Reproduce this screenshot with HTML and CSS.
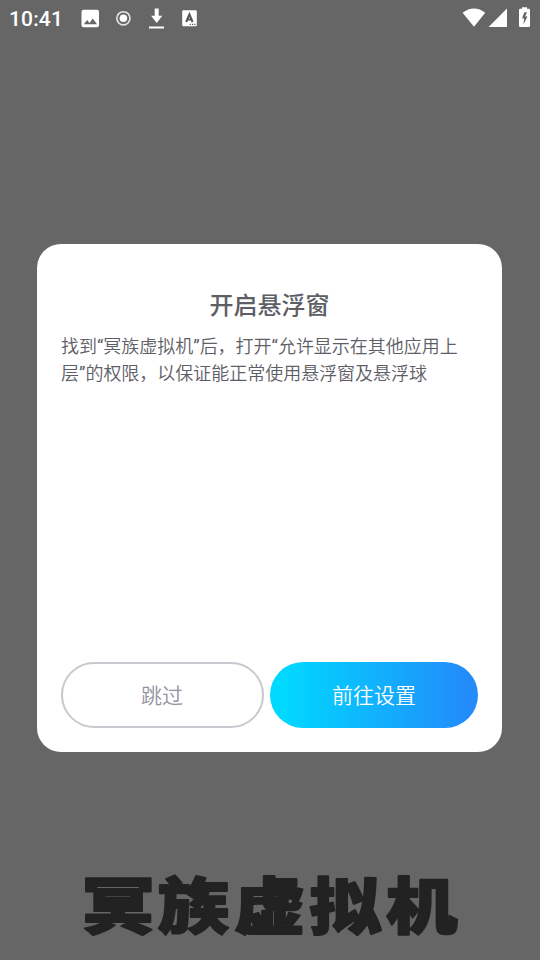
FILE: index.html
```html
<!DOCTYPE html>
<html lang="zh-CN">
<head>
<meta charset="utf-8">
<title>开启悬浮窗</title>
<link rel="stylesheet" href="styles.css">
</head>
<body>
<div class="screen">
  <header class="status">
    <span class="clock">10:41</span>
    <svg class="notices" width="120" height="36" viewBox="80 0 120 36" fill="#fff">
      <path fill-rule="evenodd" d="M83.500 9.700h13.500a2 2 0 0 1 2 2v13.500a2 2 0 0 1-2 2h-13.500a2 2 0 0 1-2-2v-13.500a2 2 0 0 1 2-2zM83.800 24.300h13.200l-4.200-5.700-3.300 4.300-2.300-2.800z"/>
      <circle cx="123.400" cy="18.300" r="6.600" fill="none" stroke="#e4e4e4" stroke-width="1.600"/>
      <circle cx="123.400" cy="18.300" r="3.800"/>
      <path d="M154.700 8.500h4v7.200h3.600l-5.600 7.400-5.600-7.400h3.600zM149 26.500h15v2h-15z"/>
      <rect x="182.200" y="10.300" width="14.600" height="16" rx="1.300"/>
      <path fill="none" stroke="#555" stroke-width="2" d="M186.200 22l3.200-7.600 3.200 7.600M187.300 19.600h4.200"/>
      <path fill="#555" d="M189.700 23.700h1.200v1.200h-1.200zM192 23.700h1.200v1.200H192zM194.300 23.700h1.200v1.200h-1.200z"/>
    </svg>
    <svg class="signals" width="72" height="36" viewBox="460 0 72 36" fill="#fff">
      <path d="M462.600 12.800Q468 8.500 474 8.500T485.200 12.800L474 26.700z"/>
      <path d="M507 8.600V27h-18.400z"/>
      <path fill-rule="evenodd" d="M522 7.200h5v1.600h1.700a1.300 1.300 0 0 1 1.300 1.300v15.600a1.300 1.300 0 0 1-1.300 1.300h-8.400a1.300 1.300 0 0 1-1.300-1.300V10.100a1.300 1.300 0 0 1 1.300-1.300h1.700zM524.300 12.200l-2.200 6.300h2.100l-.8 6 4.100-8h-2.200l1.600-4.300z"/>
    </svg>
  </header>
  <main class="dialog">
    <h1 class="title">开启悬浮窗</h1>
    <p class="message">找到<span class="quote">“</span>冥族虚拟机<span class="quote">”</span>后，打开<span class="quote">“</span>允许显示在其他应用上<br>层<span class="quote">”</span>的权限，以保证能正常使用悬浮窗及悬浮球</p>
    <div class="actions">
      <button class="button skip">跳过</button>
      <button class="button settings">前往设置</button>
    </div>
  </main>
  <footer class="brand">
    <svg width="540" height="110" viewBox="0 850 540 110">
      <text class="wordmark" transform="translate(82.500 929) scale(1.170 1)" x="0 64.500 129.500 194 259.500">冥族虚拟机</text>
    </svg>
  </footer>
</div>
</body>
</html>
```
FILE: styles.css
```css
* { box-sizing: border-box; }
body { margin: 0; }
.screen {
  width: 540px;
  height: 960px;
  overflow: hidden;
  display: flex;
  flex-direction: column;
  background: #666;
  font-family: Roboto, "Noto Sans CJK SC", sans-serif;
}
.status {
  height: 36px;
  flex: none;
  display: flex;
  align-items: center;
  padding: 0 8px 0 9px;
  color: #fff;
}
.clock {
  width: 71px;
  font-size: 21px;
  font-weight: 500;
  line-height: 36px;
  padding-top: 2px;
  letter-spacing: 0.15px;
}
.signals { margin-left: auto; }
.dialog {
  width: 465px;
  height: 508px;
  flex: none;
  margin: 208px 0 0 37px;
  padding: 44px 24px 24px;
  border-radius: 24px;
  background: #fff;
  display: flex;
  flex-direction: column;
}
.title {
  margin: 0;
  font-size: 24px;
  line-height: 36px;
  font-weight: 500;
  text-align: center;
  color: #5d5e66;
}
.message {
  margin: 9px 0 0;
  font-size: 18px;
  line-height: 27px;
  font-weight: 350;
  letter-spacing: -0.02px;
  white-space: nowrap;
  color: #5d5e66;
}
.quote { font-weight: 400; }
.actions {
  display: flex;
  gap: 6px;
  margin-top: auto;
}
.button {
  height: 66px;
  padding: 0 0 3px;
  border: 0;
  border-radius: 33px;
  font-family: inherit;
  font-size: 21px;
  font-weight: 350;
}
.skip {
  width: 203px;
  padding-right: 1px;
  border: 2px solid #c8c8ce;
  background: #fff;
  color: #92939d;
}
.settings {
  width: 208px;
  background: linear-gradient(90deg, #00d9ff 5%, #238bfa 96%);
  color: #fff;
}
.brand {
  height: 110px;
  margin-top: 98px;
}
.brand svg { display: block; }
.wordmark {
  font-family: "Noto Sans CJK SC", sans-serif;
  font-weight: 900;
  font-size: 61px;
  fill: #222;
  stroke: #222;
  stroke-width: 2px;
  stroke-linejoin: round;
}
```
